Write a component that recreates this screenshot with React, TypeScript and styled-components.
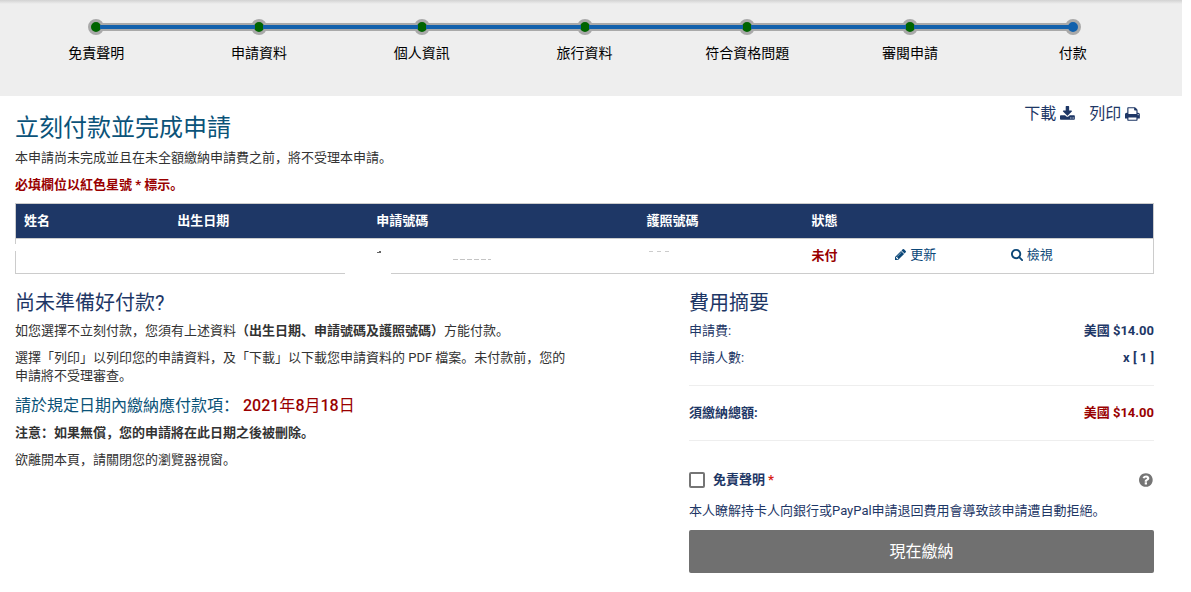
import React from "react";
import styled, { createGlobalStyle } from "styled-components";

const navy = "#1e3766";
const teal = "#0b5379";
const red = "#990000";

const GlobalStyle = createGlobalStyle`
  *, *::before, *::after { box-sizing: border-box; }
  body {
    margin: 0;
    background: #fff;
    color: #333;
    font: 13px/18px Roboto, "Noto Sans CJK SC", sans-serif;
  }
  h1, h2, h3, p, ol, dl, dd { margin: 0; padding: 0; font-weight: 400; }
`;

const Page = styled.div`
  margin-right: 9px;
`;

const StepBand = styled.nav`
  height: 96px;
  background: linear-gradient(#d2d2d2, #eee 4px);
`;

const Container = styled.div`
  max-width: 1169px;
  padding: 0 15px;
`;

const Steps = styled.ol`
  display: flex;
  padding-top: 19px;
  list-style: none;
`;

const Step = styled.li`
  position: relative;
  flex: 1;
  display: flex;
  flex-direction: column;
  align-items: center;
  gap: 8px;
  color: #000;
  font-size: 14px;
  line-height: 20px;

  &:not(:first-child)::before,
  &:not(:first-child)::after {
    content: "";
    position: absolute;
    left: -50%;
    width: 100%;
    top: 4px;
    height: 8px;
    background: #a9a9a9;
  }
  &:not(:first-child)::after {
    z-index: 2;
    left: calc(-50% + 4px);
    width: calc(100% - 8px);
    top: 6px;
    height: 4px;
    background: #1261ac;
  }
`;

const Dot = styled.span<{ $current: boolean }>`
  z-index: 1;
  width: 16px;
  height: 16px;
  border: 3px solid #a9a9a9;
  border-radius: 50%;
  background: ${(p) => (p.$current ? "#1261ac" : "#006400")};
`;

const TitleRow = styled.header`
  display: flex;
  justify-content: space-between;
  align-items: flex-start;
  padding-top: 8px;
`;

const Title = styled.h1`
  padding: 8px 0 5px;
  color: ${teal};
  font-size: 24px;
  line-height: 32px;
`;

const Tools = styled.div`
  display: flex;
  gap: 14px;
  padding-right: 14px;
`;

const ToolButton = styled.button`
  display: flex;
  align-items: center;
  gap: 4px;
  padding: 0;
  border: 0;
  background: none;
  color: ${navy};
  font: inherit;
  font-size: 16px;
  line-height: 20px;
`;

const Para = styled.p`
  margin-bottom: 9px;
`;

const Required = styled(Para)`
  color: ${red};
  font-weight: 700;
`;

const TableWrap = styled.div`
  position: relative;
`;

const Erased = styled.span<{ $edge: "left" | "bottom" }>`
  position: absolute;
  background: #fff;
  ${(p) =>
    p.$edge === "left"
      ? "left: 0; top: 41px; width: 1px; height: 7px;"
      : "left: 29%; bottom: 0; width: 46px; height: 1px;"}
`;

const Table = styled.table`
  width: 100%;
  table-layout: fixed;
  border-collapse: collapse;
  border: 1px solid #ccc;
`;

const Col = styled.col<{ $share: number }>`
  width: ${(p) => p.$share}%;
`;

const HeadCell = styled.th`
  height: 35px;
  padding: 0 8px;
  background: ${navy};
  color: #fff;
  text-align: left;
`;

const Cell = styled.td`
  height: 35px;
  padding: 0 8px;
  border-top: 1px solid #ccc;
`;

const Traces = styled.svg`
  display: block;
`;

const Status = styled.strong`
  color: ${red};
`;

const RowLink = styled.a`
  display: inline-flex;
  align-items: center;
  gap: 4px;
  color: #0b4778;
  text-decoration: none;
`;

const Columns = styled.div`
  display: grid;
  grid-template-columns: minmax(0, 1fr) minmax(0, 465px);
  column-gap: 60px;
  padding-top: 16px;
`;

const Info = styled.section`
  max-width: 555px;
`;

const SubTitle = styled.h2`
  margin-bottom: 6px;
  color: ${navy};
  font-size: 20px;
  line-height: 26px;
`;

const DueLine = styled.h3`
  margin-bottom: 6px;
  color: ${teal};
  font-size: 16px;
  line-height: 24px;
`;

const DueDate = styled.span`
  color: ${red};
`;

const Digits = styled.b`
  font-weight: 500;
`;

const Summary = styled.section`
  color: ${navy};
`;

const FeeList = styled.dl`
  display: grid;
  gap: 9px;
  padding-bottom: 18px;
  border-bottom: 1px solid #eee;
`;

const TotalList = styled(FeeList)`
  padding: 18px 0;
`;

const Fee = styled.div<{ $strong?: boolean }>`
  display: flex;
  justify-content: space-between;
  font-weight: ${(p) => (p.$strong ? 700 : 400)};
`;

const Amount = styled.dd<{ $due?: boolean }>`
  color: ${(p) => (p.$due ? red : navy)};
  font-weight: 700;
`;

const ConsentRow = styled.div`
  display: flex;
  align-items: center;
  justify-content: space-between;
  padding: 30px 1px 13px 0;
`;

const ConsentLabel = styled.label`
  display: flex;
  align-items: center;
  font-weight: 700;
`;

const Checkbox = styled.input`
  appearance: none;
  width: 16px;
  height: 16px;
  margin: 0 8px 0 0;
  border: 2px solid #757575;
  border-radius: 2px;
  background: #fff;
`;

const Star = styled.span`
  margin-left: 3px;
  color: #d82215;
`;

const HelpButton = styled.button`
  display: flex;
  padding: 0;
  border: 0;
  background: none;
  color: #757575;
`;

const PayButton = styled.button`
  width: 100%;
  height: 43px;
  margin-top: 1px;
  border: 0;
  border-radius: 2px;
  background: #707070;
  color: #fff;
  font: inherit;
  font-size: 16px;
`;

const glyphs = {
  download: {
    w: 1664,
    d: "M1280 1344q0-26-19-45t-45-19-45 19-19 45 19 45 45 19 45-19 19-45zm256 0q0-26-19-45t-45-19-45 19-19 45 19 45 45 19 45-19 19-45zm128-224v320q0 40-28 68t-68 28H96q-40 0-68-28t-28-68v-320q0-40 28-68t68-28h465l135 136q58 56 136 56t136-56l136-136h464q40 0 68 28t28 68zm-325-569q17 41-14 70l-448 448q-18 19-45 19t-45-19L339 621q-31-29-14-70 17-39 59-39h256V64q0-26 19-45t45-19h256q26 0 45 19t19 45v448h256q42 0 59 39z",
  },
  print: {
    w: 1664,
    d: "M384 1536h896v-256H384v256zm0-640h896V512h-160q-40 0-68-28t-28-68V256H384v640zm1152 64q0-26-19-45t-45-19-45 19-19 45 19 45 45 19 45-19 19-45zm128 0v416q0 13-9.5 22.5t-22.5 9.5h-224v160q0 40-28 68t-68 28H352q-40 0-68-28t-28-68v-160H32q-13 0-22.5-9.5T0 1376V960q0-79 56.5-135.5T192 768h64V224q0-40 28-68t68-28h672q40 0 88 20t76 48l152 152q28 28 48 76t20 88v256h64q79 0 135.5 56.5T1664 960z",
  },
  pencil: {
    w: 1536,
    d: "M363 1536l91-91-235-235-91 91v107h128v128h107zm523-928q0-22-22-22-10 0-17 7l-542 542q-7 7-7 17 0 22 22 22 10 0 17-7l542-542q7-7 7-17zm-54-192l416 416-832 832H0v-416zm683 96q0 53-37 90l-166 166-416-416 166-165q36-38 90-38 53 0 91 38l235 234q37 39 37 91z",
  },
  search: {
    w: 1664,
    d: "M1152 832q0-185-131.5-316.5T704 384 387.5 515.5 256 832t131.5 316.5T704 1280t316.5-131.5T1152 832zm512 832q0 52-38 90t-90 38q-54 0-90-38l-343-342q-179 124-399 124-143 0-273.5-55.5t-225-150-150-225T0 832t55.5-273.5 150-225 225-150T704 128t273.5 55.5 225 150 150 225T1408 832q0 220-124 399l343 343q37 37 37 90z",
  },
  help: {
    w: 1536,
    d: "M896 1376v-192q0-14-9-23t-23-9H672q-14 0-23 9t-9 23v192q0 14 9 23t23 9h192q14 0 23-9t9-23zm256-672q0-88-55.5-163T958 425t-170-41q-243 0-371 213-15 24 8 42l132 100q7 6 19 6 16 0 25-12 53-68 86-92 34-24 86-24 48 0 85.5 26t37.5 59q0 38-20 61t-68 45q-63 28-115.5 86.5T640 1020v36q0 14 9 23t23 9h192q14 0 23-9t9-23q0-19 21.5-49.5T972 957q32-18 49-28.5t46-35 44.5-48 28-60.5 12.5-81zm384 192q0 209-103 385.5T1153.5 1561 768 1664t-385.5-103T103 1281.5 0 896t103-385.5T382.5 231 768 128t385.5 103T1433 510.5 1536 896z",
  },
};

function Icon({ name, size }: { name: keyof typeof glyphs; size: number }) {
  const g = glyphs[name];
  return (
    <svg
      width={(size * g.w) / 1792}
      height={size}
      viewBox={`0 0 ${g.w} 1792`}
      fill="currentColor"
      aria-hidden="true"
    >
      <path d={g.d} />
    </svg>
  );
}

const steps = ["免責聲明", "申請資料", "個人資訊", "旅行資料", "符合資格問題", "審閱申請", "付款"];

const columns = [
  { label: "姓名", share: 13.5 },
  { label: "出生日期", share: 17.5 },
  { label: "申請號碼", share: 23.75 },
  { label: "護照號碼", share: 14.5 },
  { label: "狀態", share: 7.35 },
  { label: "", share: 10.15 },
  { label: "", share: 13.25 },
];

export default function App() {
  return (
    <Page>
      <GlobalStyle />
      <StepBand>
        <Container>
          <Steps>
            {steps.map((s, i) => (
              <Step key={s}>
                <Dot $current={i === steps.length - 1} />
                {s}
              </Step>
            ))}
          </Steps>
        </Container>
      </StepBand>
      <Container as="main">
        <TitleRow>
          <Title>立刻付款並完成申請</Title>
          <Tools>
            <ToolButton type="button">
              下載
              <Icon name="download" size={16} />
            </ToolButton>
            <ToolButton type="button">
              列印
              <Icon name="print" size={16} />
            </ToolButton>
          </Tools>
        </TitleRow>
        <Para>本申請尚未完成並且在未全額繳納申請費之前，將不受理本申請。</Para>
        <Required>必填欄位以紅色星號 * 標示。</Required>

        <TableWrap>
          <Table>
            <colgroup>
              {columns.map((c, i) => (
                <Col key={i} $share={c.share} />
              ))}
            </colgroup>
            <thead>
              <tr>
                {columns.map((c, i) => (
                  <HeadCell key={i} scope="col">
                    {c.label}
                  </HeadCell>
                ))}
              </tr>
            </thead>
            <tbody>
              <tr>
                <Cell />
                <Cell />
                <Cell>
                  {/* what is left of the redacted application number */}
                  <Traces width="120" height="18" aria-hidden="true">
                    <path d="M1 5h2v-1h2v2h-4z" fill="#666" />
                    <path d="M77 12.5h38" stroke="#c4c4c4" strokeDasharray="5 2" />
                  </Traces>
                </Cell>
                <Cell>
                  {/* what is left of the redacted passport number */}
                  <Traces width="30" height="18" aria-hidden="true">
                    <path d="M2 4.5h24" stroke="#ccc" strokeDasharray="4 4" />
                  </Traces>
                </Cell>
                <Cell>
                  <Status>未付</Status>
                </Cell>
                <Cell>
                  <RowLink href="#update">
                    <Icon name="pencil" size={13} />
                    更新
                  </RowLink>
                </Cell>
                <Cell>
                  <RowLink href="#view">
                    <Icon name="search" size={13} />
                    檢視
                  </RowLink>
                </Cell>
              </tr>
            </tbody>
          </Table>
          <Erased $edge="left" />
          <Erased $edge="bottom" />
        </TableWrap>

        <Columns>
          <Info>
            <SubTitle>尚未準備好付款?</SubTitle>
            <Para>
              如您選擇不立刻付款，您須有上述資料<strong>（出生日期、申請號碼及護照號碼）</strong>方能付款。
            </Para>
            <Para>
              選擇「列印」以列印您的申請資料，及「下載」以下載您申請資料的 PDF 檔案。未付款前，您的申請將不受理審查。
            </Para>
            <DueLine>
              請於規定日期內繳納應付款項：{" "}
              <DueDate>
                <Digits>2021</Digits>年<Digits>8</Digits>月<Digits>18</Digits>日
              </DueDate>
            </DueLine>
            <Para>
              <strong>注意：如果無償，您的申請將在此日期之後被刪除。</strong>
            </Para>
            <Para>欲離開本頁，請關閉您的瀏覽器視窗。</Para>
          </Info>

          <Summary>
            <SubTitle>費用摘要</SubTitle>
            <FeeList>
              <Fee>
                <dt>申請費:</dt>
                <Amount>美國 $14.00</Amount>
              </Fee>
              <Fee>
                <dt>申請人數:</dt>
                <Amount>x [ 1 ]</Amount>
              </Fee>
            </FeeList>
            <TotalList>
              <Fee $strong>
                <dt>須繳納總額:</dt>
                <Amount $due>美國 $14.00</Amount>
              </Fee>
            </TotalList>
            <ConsentRow>
              <ConsentLabel>
                <Checkbox type="checkbox" />
                免責聲明<Star>*</Star>
              </ConsentLabel>
              <HelpButton type="button" aria-label="說明">
                <Icon name="help" size={16} />
              </HelpButton>
            </ConsentRow>
            <Para>本人瞭解持卡人向銀行或PayPal申請退回費用會導致該申請遭自動拒絕。</Para>
            <PayButton type="button">現在繳納</PayButton>
          </Summary>
        </Columns>
      </Container>
    </Page>
  );
}
